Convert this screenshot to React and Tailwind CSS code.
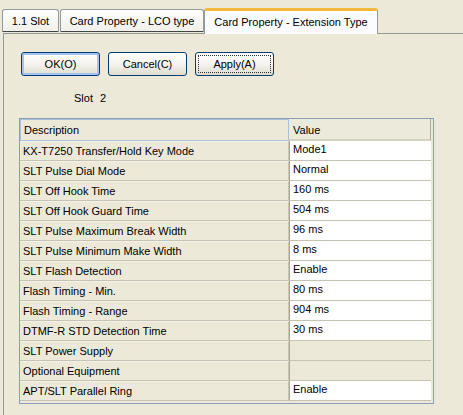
import React from "react";

const rows = [
  ["KX-T7250 Transfer/Hold Key Mode", "Mode1"],
  ["SLT Pulse Dial Mode", "Normal"],
  ["SLT Off Hook Time", "160 ms"],
  ["SLT Off Hook Guard Time", "504 ms"],
  ["SLT Pulse Maximum Break Width", "96 ms"],
  ["SLT Pulse Minimum Make Width", "8 ms"],
  ["SLT Flash Detection", "Enable"],
  ["Flash Timing - Min.", "80 ms"],
  ["Flash Timing - Range", "904 ms"],
  ["DTMF-R STD Detection Time", "30 ms"],
  ["SLT Power Supply", null],
  ["Optional Equipment", null],
  ["APT/SLT Parallel Ring", "Enable"],
];

function Btn({ children, variant }) {
  return (
    <div
      className={
        "w-[79px] h-[24px] rounded-[3px] border border-[#003c74] bg-gradient-to-b from-[#ffffff] via-[#f5f4ef] to-[#dedbd0] flex items-center justify-center text-[11px] text-black " +
        (variant === "default" ? "shadow-[inset_0_0_0_2px_#a6c3ef]" : "")
      }
    >
      {variant === "focus" ? (
        <div className="w-[73px] h-[18px] border border-dotted border-[#333] flex items-center justify-center">
          {children}
        </div>
      ) : (
        children
      )}
    </div>
  );
}

export default function App() {
  return (
    <div
      className="w-[463px] h-[415px] bg-[#ece9d8] overflow-hidden text-black"
      style={{ fontFamily: '"Liberation Sans", Arial, sans-serif' }}
    >
      {/* Tabs */}
      <div className="flex items-end h-[33px] pl-[2px]">
        <div className="w-[57px] h-[23px] border border-b-0 border-[#919b9c] rounded-t-[3px] bg-gradient-to-b from-[#fefefe] to-[#f0efe8] flex items-center justify-center text-[11px] mb-px shadow-[inset_0_-1px_0_#444]">
          1.1 Slot
        </div>
        <div className="ml-[1px] w-[144px] h-[23px] border border-b-0 border-[#919b9c] rounded-t-[3px] bg-gradient-to-b from-[#fefefe] to-[#f0efe8] flex items-center justify-center text-[11px] mb-px shadow-[inset_0_-1px_0_#444]">
          Card Property - LCO type
        </div>
        <div className="relative w-[174px] h-[26px] border-x border-[#919b9c] border-t-[3px] border-t-[#f5b93c] rounded-t-[3px] bg-[#fcfcfe] flex items-start justify-center pt-[3px] text-[11px] -mb-px">
          Card Property - Extension Type
        </div>
      </div>

      {/* Panel */}
      <div className="ml-[3px] h-[400px] border-l border-t border-[#919b9c] pl-[15px] pt-[18px]">
        <div className="flex gap-[8px] ml-[2px]">
          <Btn variant="default">OK(O)</Btn>
          <Btn>Cancel(C)</Btn>
          <Btn variant="focus">Apply(A)</Btn>
        </div>

        <div className="flex items-center h-[18px] mt-[13px] ml-[55px] text-[11px]">
          <span>Slot</span>
          <span className="ml-[7px]">2</span>
        </div>

        {/* Table */}
        <div className="mt-[11px] w-[415px] border border-[#8b9eb4] pr-[2px] pb-[2px]">
          <div className="flex h-[22px]">
            <div className="w-[269px] border border-[#a9c2da] bg-[#ece9d8] flex items-center pl-[3px] text-[11px]">
              Description
            </div>
            <div className="flex-1 bg-[#ebeadb] border-b-2 border-[#d6d2c2] border-r border-r-[#aca899] flex items-center pl-[4px] pt-[2px] text-[11px]">
              Value
            </div>
          </div>
          {rows.map(([d, v], i) => (
            <div key={i} className="flex h-[20px]">
              <div className="w-[269px] bg-[#ece9d8] border-b border-[#c6c3b3] border-t border-t-[#f3f1e8] border-r border-r-[#c9c6b6] flex items-center pl-[3px] pt-[1px] text-[11px]">
                {d}
              </div>
              <div
                className={
                  "flex-1 border-b border-[#c6c3b3] border-l border-l-[#a9a798] pl-[3px] pb-[3px] flex items-center text-[11px] " +
                  (v === null ? "bg-[#ece9d8]" : "bg-white")
                }
              >
                {v}
              </div>
            </div>
          ))}
        </div>
      </div>
    </div>
  );
}
